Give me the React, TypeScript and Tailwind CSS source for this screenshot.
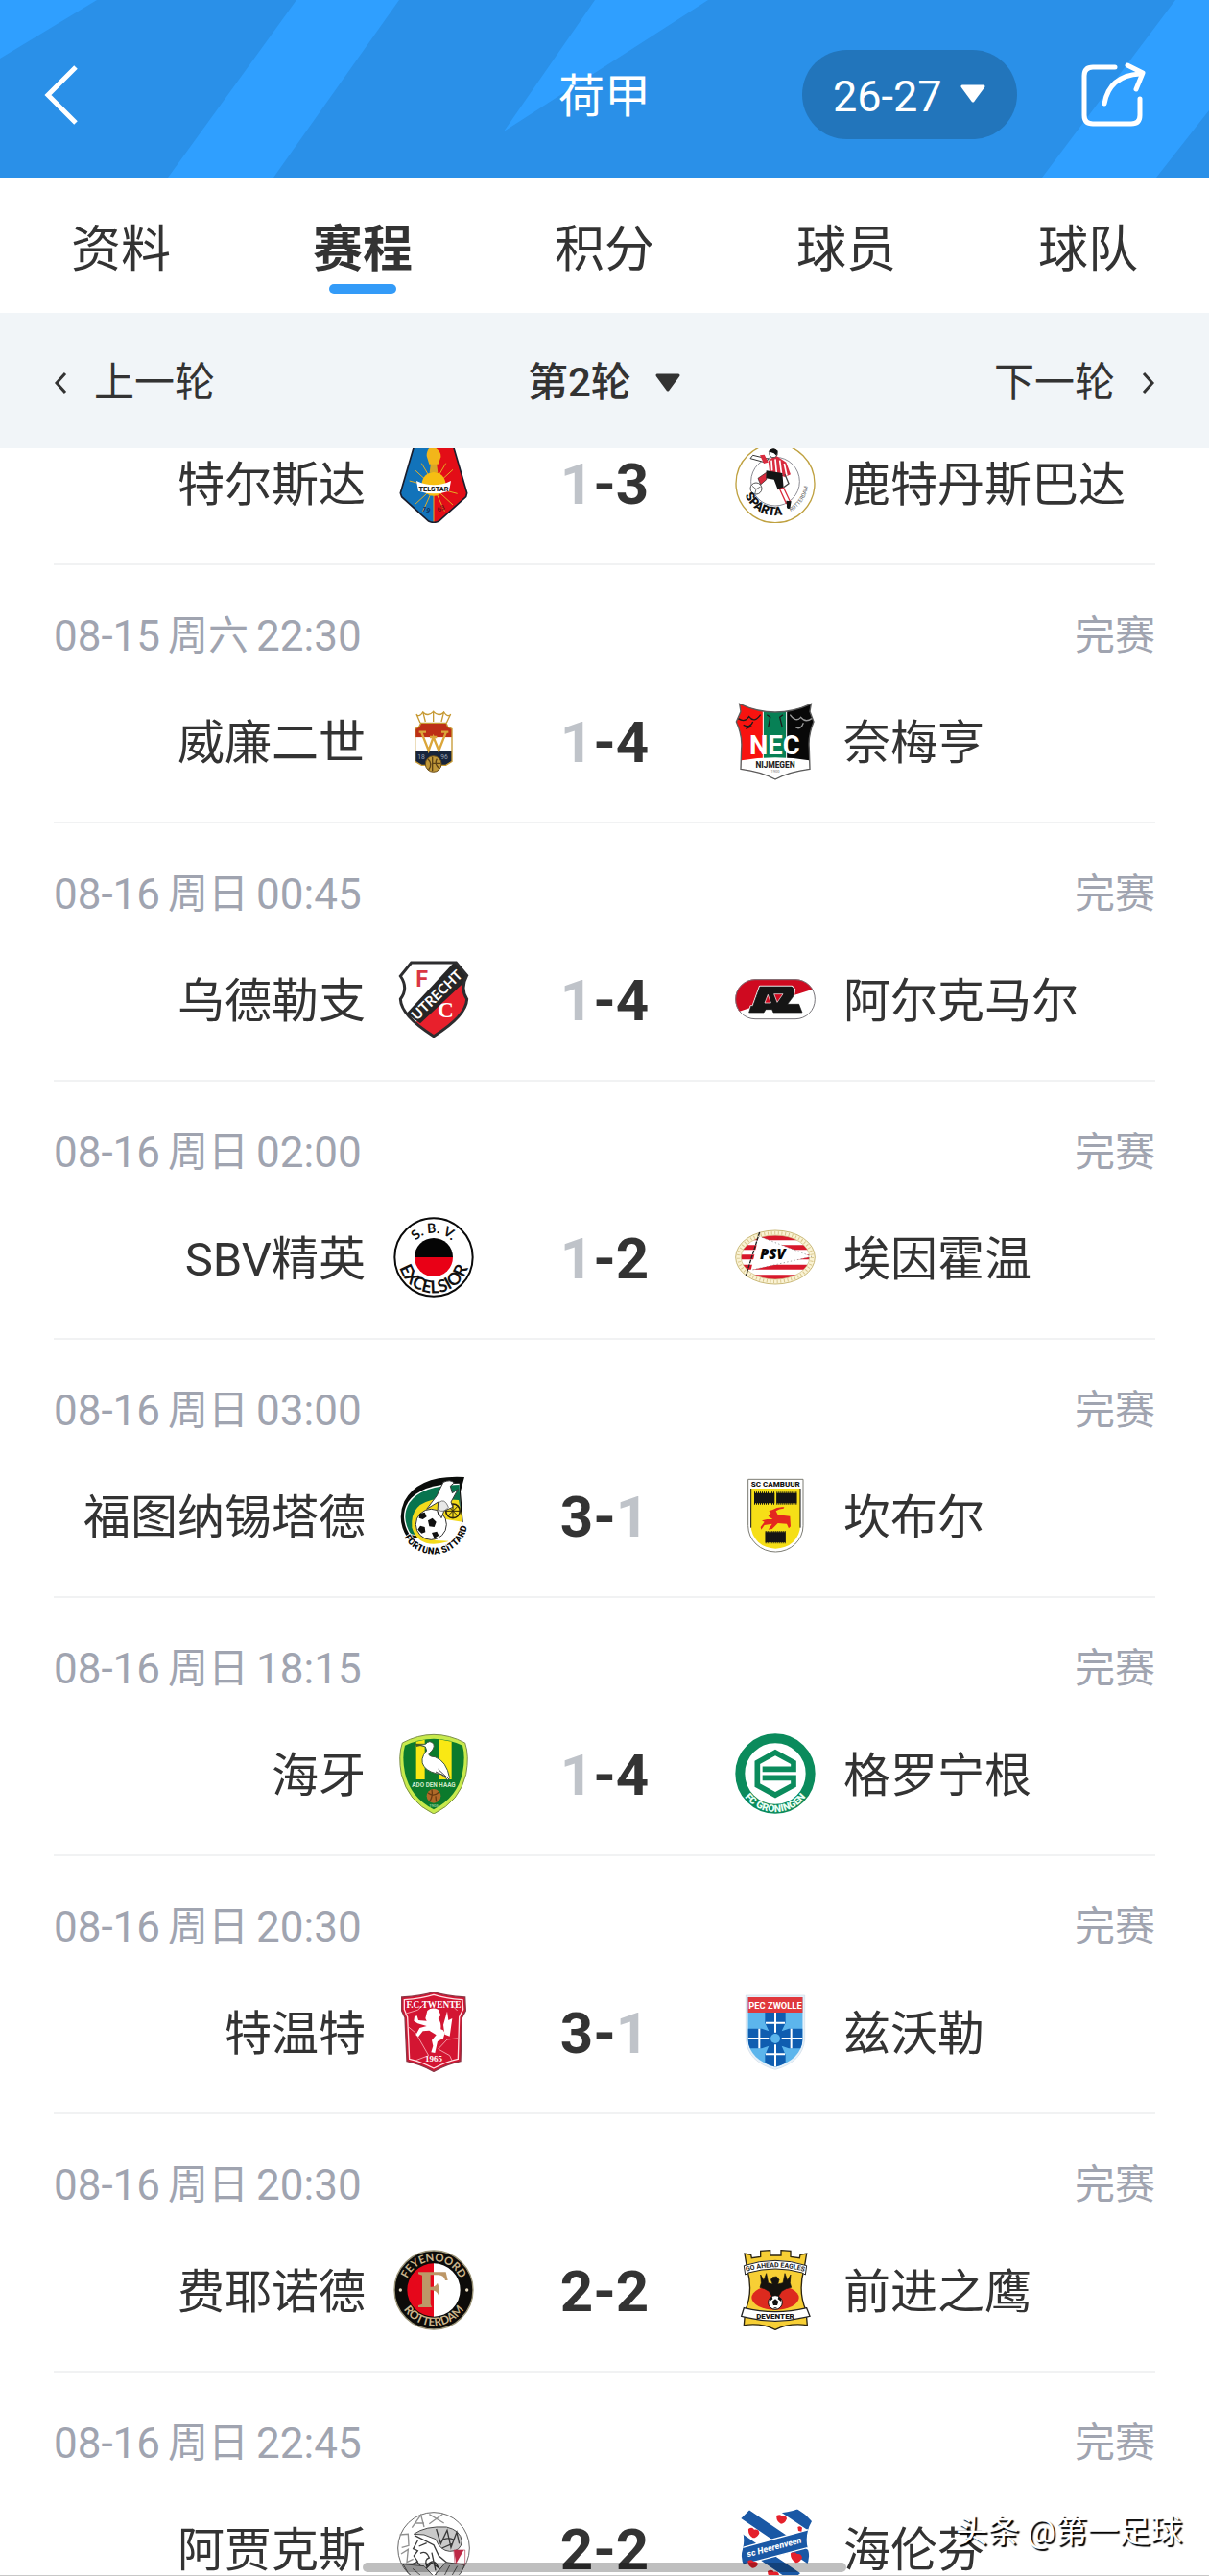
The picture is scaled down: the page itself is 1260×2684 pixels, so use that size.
import React from "react";

type TCrest = {
  children: React.ReactNode;
};

type TMatch = {
  date?: string;
  day?: string;
  time?: string;
  home: string;
  away: string;
  homeGoals: number;
  awayGoals: number;
  homeCrest: React.ReactNode;
  awayCrest: React.ReactNode;
};

const Crest = ({ children }: TCrest) => (
  <svg
    viewBox="0 0 252 252"
    className="size-[84px] shrink-0"
    aria-hidden="true"
  >
    {children}
  </svg>
);

const Telstar = () => (
  <Crest>
    <clipPath id="telstar">
      <path d="M80 2 H172 L188 14 L230 158 L227 170 L142 246 Q126 254 110 246 L26 170 L22 158 L64 14 Z" />
    </clipPath>
    <g clipPath="url(#telstar)">
      <rect width="126" height="252" fill="#1273ba" />
      <rect x="126" width="126" height="252" fill="#e30d17" />
      <path
        d="M126 60 V250 M66 85 L186 195 M186 85 L66 195 M88 65 L126 130 L164 65 M92 215 L126 140 L160 215 M50 120 L200 160"
        stroke="#e3ae25"
        strokeWidth="3"
        fill="none"
      />
      <path d="M113 95 L117 62 H135 L139 95 Z" fill="#d9a827" />
      <path d="M104 42 Q104 20 120 12 Q150 22 148 46 L140 68 H112 Z" fill="#f2b61a" />
      <circle cx="126" cy="130" r="37" fill="#f6bd12" />
      <path d="M72 120 Q126 146 180 120 L174 152 Q126 168 78 152 Z" fill="#fff" />
      <text x="126" y="154" textAnchor="middle" fontSize="22" fontWeight="800" fill="#222">
        TELSTAR
      </text>
      <text x="88" y="212" fontSize="22" fontWeight="700" fill="#12315e" transform="rotate(24 88 212)">
        19
      </text>
      <text x="140" y="218" fontSize="22" fontWeight="700" fill="#7a0d14" transform="rotate(-24 140 218)">
        63
      </text>
    </g>
    <path
      d="M80 2 H172 L188 14 L230 158 L227 170 L142 246 Q126 254 110 246 L26 170 L22 158 L64 14 Z"
      fill="none"
      stroke="#1a1d2c"
      strokeWidth="5"
    />
  </Crest>
);

const Sparta = () => (
  <Crest>
    <path id="sparta-arc" d="M24 126 A102 102 0 0 0 228 126" fill="none" />
    <circle cx="126" cy="128" r="123" fill="#fff" stroke="#bfa140" strokeWidth="4" />
    <circle cx="126" cy="122" r="76" fill="none" stroke="#8b8b93" strokeWidth="3" />
    <path d="M104 58 L126 40 L160 62 L174 100 L156 108 L108 90 Z" fill="#d92b3e" />
    <path d="M114 56 L116 88 M126 52 L130 96 M140 56 L146 102 M154 66 L162 104" stroke="#fff" strokeWidth="5" />
    <path d="M106 52 L56 40 L48 50 L92 62 Z" fill="#fff" stroke="#333" strokeWidth="3" />
    <path d="M78 40 L92 38 L104 62 L90 66 Z" fill="#d92b3e" />
    <circle cx="120" cy="34" r="13" fill="#fff" stroke="#111" strokeWidth="2" />
    <path d="M104 28 Q120 10 134 26 L130 42 L122 34 Z" fill="#111" />
    <path d="M98 88 L148 96 L152 142 L134 148 L122 116 L96 112 Z" fill="#141414" />
    <path d="M98 94 L72 112 L80 132 L98 116 Z" fill="#d92b3e" stroke="#222" strokeWidth="2" />
    <circle cx="66" cy="144" r="18" fill="#fff" stroke="#555" strokeWidth="3" />
    <path d="M54 136 L66 146 L80 138 M66 146 L62 162" stroke="#777" strokeWidth="3" fill="none" />
    <path d="M140 146 L152 142 L172 184 L160 190 Z" fill="#fff" stroke="#d92b3e" strokeWidth="4" />
    <path d="M160 182 L176 184 L172 206 Q160 210 162 196 Z" fill="#111" />
    <path d="M156 100 L168 128 L152 140" fill="none" stroke="#444" strokeWidth="4" />
    <text fontSize="38" fontWeight="900" fill="#111">
      <textPath href="#sparta-arc" startOffset="40">
        SPARTA
      </textPath>
    </text>
    <text fontSize="17" fill="#555">
      <textPath href="#sparta-arc" startOffset="210">
        ROTTERDAM
      </textPath>
    </text>
  </Crest>
);

const Willem = () => (
  <Crest>
    <path
      d="M84 70 L72 42 M100 66 L92 34 M125 66 V32 M150 66 L158 34 M166 70 L179 42 M72 44 Q82 52 92 36 Q108 52 125 34 Q142 52 158 36 Q168 52 179 44"
      fill="none"
      stroke="#c79a34"
      strokeWidth="4"
    />
    <clipPath id="willem">
      <path d="M86 70 H165 L170 82 L183 88 V190 L164 202 H88 L68 190 V88 L80 82 Z" />
    </clipPath>
    <g clipPath="url(#willem)">
      <rect width="252" height="115" fill="#bd2f16" />
      <rect y="115" width="252" height="42" fill="#fff" />
      <rect y="157" width="252" height="95" fill="#17243b" />
      <text x="76" y="184" fontSize="20" fill="#9aa3b5">18</text>
      <text x="148" y="184" fontSize="20" fill="#9aa3b5">96</text>
    </g>
    <path d="M86 70 H165 L170 82 L183 88 V190 L164 202 H88 L68 190 V88 L80 82 Z" fill="none" stroke="#c79a34" strokeWidth="4" />
    <path
      d="M88 100 L110 156 L125 114 L142 156 L164 100 M80 98 H102 M150 98 H172 M114 114 H136"
      fill="none"
      stroke="#dba63a"
      strokeWidth="7"
    />
    <circle cx="125" cy="198" r="25" fill="#c0983a" stroke="#6b4d18" strokeWidth="3" />
    <path d="M108 182 Q124 198 110 216 M122 176 V220 M136 182 Q126 198 144 212 M122 196 H148" fill="none" stroke="#5d4216" strokeWidth="4" />
  </Crest>
);

const Nec = () => (
  <Crest>
    <clipPath id="nec">
      <path d="M14 10 Q126 62 238 10 L234 34 L246 66 Q228 110 232 150 L234 214 Q170 222 126 246 Q82 222 18 214 L20 150 Q24 110 4 66 L18 34 Z" />
    </clipPath>
    <g clipPath="url(#nec)">
      <rect width="89" height="252" fill="#f8130f" />
      <rect x="89" width="71" height="252" fill="#078055" />
      <rect x="160" width="92" height="252" fill="#080808" />
      <path d="M88 0 V180 M161 0 V180" stroke="#fff" strokeWidth="3" />
      <path d="M0 190 Q126 166 252 190 V252 H0 Z" fill="#fff" />
      <path
        d="M10 56 Q30 70 44 50 Q60 72 80 44 M26 76 Q48 88 56 66 M34 88 L52 80 M100 44 L110 52 L104 84 M150 44 L140 52 L148 84"
        fill="none"
        stroke="#1b1b1b"
        strokeWidth="4"
      />
      <path d="M172 44 Q190 70 206 52 Q220 70 240 56 M190 84 Q206 92 214 70" fill="none" stroke="#9a9a9a" strokeWidth="4" />
    </g>
    <path
      d="M14 10 Q126 62 238 10 L234 34 L246 66 Q228 110 232 150 L234 214 Q170 222 126 246 Q82 222 18 214 L20 150 Q24 110 4 66 L18 34 Z"
      fill="none"
      stroke="#5b5b5b"
      strokeWidth="4"
    />
    <text x="124" y="168" textAnchor="middle" fontSize="82" fontWeight="700" fill="#fff">
      NEC
    </text>
    <text x="126" y="210" textAnchor="middle" fontSize="25" fontWeight="800" fill="#222">
      NIJMEGEN
    </text>
    <text x="126" y="225" textAnchor="middle" fontSize="12" fill="#777">
      1900
    </text>
  </Crest>
);

const Utrecht = () => (
  <Crest>
    <clipPath id="utrecht">
      <path d="M56 12 H196 L230 52 Q208 92 230 126 Q228 178 126 242 Q24 178 22 126 Q48 92 22 54 Z" />
    </clipPath>
    <g clipPath="url(#utrecht)">
      <rect width="252" height="252" fill="#fff" />
      <path d="M252 40 L70 198 L126 252 H252 Z" fill="#e8202c" />
      <path d="M196 4 L244 52 L84 202 L40 172 Z" fill="#262626" />
    </g>
    <path
      d="M56 12 H196 L230 52 Q208 92 230 126 Q228 178 126 242 Q24 178 22 126 Q48 92 22 54 Z"
      fill="none"
      stroke="#2d2d2f"
      strokeWidth="9"
    />
    <text x="70" y="88" fontSize="70" fontWeight="700" fill="#d93743">
      F
    </text>
    <text x="138" y="184" fontFamily="Liberation Serif" fontSize="70" fontWeight="700" fill="#fff">
      C
    </text>
    <text x="74" y="194" fontFamily="Lato" fontSize="44" fontWeight="700" fill="#fff" transform="rotate(-44 74 194)">
      UTRECHT
    </text>
  </Crest>
);

const Az = () => (
  <Crest>
    <clipPath id="az">
      <rect x="1" y="64" width="250" height="125" rx="62" />
    </clipPath>
    <g clipPath="url(#az)">
      <rect width="252" height="252" fill="#fff" />
      <path d="M0 60 H252 V92 L196 110 L50 152 L14 164 L0 166 Z" fill="#cf0a20" />
    </g>
    <rect x="2" y="65" width="248" height="123" rx="61" fill="none" stroke="#77757a" strokeWidth="3" />
    <path
      d="M78 87 H178 L186 96 L182 118 L164 142 H200 L210 168 H120 L116 158 H96 L90 168 H44 L50 148 H56 Z"
      fill="#151515"
      stroke="#fff"
      strokeWidth="7"
      strokeLinejoin="round"
    />
    <path
      d="M78 87 H178 L186 96 L182 118 L164 142 H200 L210 168 H120 L116 158 H96 L90 168 H44 L50 148 H56 Z"
      fill="#151515"
      stroke="#151515"
      strokeWidth="2"
    />
    <path d="M103 112 L93 138 H112 Z" fill="#cf0a20" stroke="#fff" strokeWidth="2" />
    <path d="M122 110 H150 L132 136 Z" fill="#cf0a20" stroke="#fff" strokeWidth="2" />
  </Crest>
);

const Excelsior = () => (
  <Crest>
    <path id="exc-top" d="M50 126 A76 76 0 0 1 202 126" fill="none" />
    <path id="exc-bottom" d="M14 126 A112 112 0 0 0 238 126" fill="none" />
    <circle cx="126" cy="126" r="122" fill="#fff" stroke="#0a0a0a" strokeWidth="6" />
    <path d="M66 126 A60 60 0 0 1 186 126 Z" fill="#050505" />
    <path d="M66 126 A60 60 0 0 0 186 126 Z" fill="#e90016" />
    <text fontFamily="Lato" fontSize="42" fontWeight="700" textAnchor="middle" fill="#111">
      <textPath href="#exc-top" startOffset="50%">
        S. B. V.
      </textPath>
    </text>
    <text fontFamily="Lato" fontSize="54" fontWeight="700" textAnchor="middle" fill="#111">
      <textPath href="#exc-bottom" startOffset="50%">
        EXCELSIOR
      </textPath>
    </text>
  </Crest>
);

const Psv = () => (
  <Crest>
    <clipPath id="psv">
      <ellipse cx="126" cy="126" rx="107" ry="69" />
    </clipPath>
    <ellipse cx="126" cy="126" rx="124" ry="84" fill="#faf3d4" stroke="#c9b878" strokeWidth="3" />
    <ellipse cx="126" cy="126" rx="115" ry="76" fill="none" stroke="#d9c68c" strokeWidth="10" strokeDasharray="3 8" />
    <g clipPath="url(#psv)">
      <rect width="252" height="252" fill="#fff" />
      <path d="M0 65 H252 M0 95 H252 M0 125 H252 M0 157 H252 M0 188 H252" stroke="#d8182b" strokeWidth="15" />
    </g>
    <ellipse cx="126" cy="126" rx="107" ry="69" fill="none" stroke="#c9b878" strokeWidth="2" />
    <path d="M74 60 L240 124 L50 166 Z" fill="#fff" />
    <path d="M74 60 L240 124 L50 166" fill="none" stroke="#777" strokeWidth="2" strokeDasharray="4 7" />
    <path d="M77 48 L34 184" stroke="#222" strokeWidth="4" strokeDasharray="12 3" />
    <text x="78" y="132" fontFamily="Open Sans" fontSize="45" fontWeight="800" fontStyle="italic" fill="#060606">
      PSV
    </text>
  </Crest>
);

const Fortuna = () => (
  <Crest>
    <path id="fortuna-arc" d="M22 160 A104 104 0 0 0 230 124" fill="none" />
    <path d="M222 6 L210 50 L218 146 L160 200 L44 196 Q8 140 34 82 Q78 -2 222 6 Z" fill="#0b0d0b" />
    <path d="M206 26 L210 146 L160 202 L50 186 Q18 130 46 84 Q86 26 206 26 Z" fill="#fff" />
    <path d="M206 30 L210 146 L160 202 L54 184 Q22 130 50 86 Q88 32 206 30 Z" fill="#08744e" />
    <path d="M204 78 L216 146 L170 208 Q80 234 58 164 Q50 84 140 74 Z" fill="#f4da1c" />
    <path d="M150 136 L216 146 L176 206 L130 204 Z" fill="#fff" />
    <circle cx="118" cy="154" r="48" fill="#fff" stroke="#333" strokeWidth="3" />
    <path
      d="M108 142 L122 134 L134 146 L128 162 L112 160 Z M82 120 L98 116 L104 130 L92 138 L80 134 Z M84 158 L98 162 L100 178 L88 182 L76 170 Z M120 180 L136 176 L142 188 L128 198 Z M136 112 L148 116 L154 128 L140 126 Z"
      fill="#111"
    />
    <circle cx="186" cy="112" r="22" fill="#f4da1c" stroke="#2b2410" strokeWidth="5" />
    <path d="M186 90 V134 M164 112 H208 M171 97 L201 127 M201 97 L171 127" stroke="#2b2410" strokeWidth="3" />
    <path
      d="M156 22 Q178 12 190 24 L178 34 L184 56 L202 44 L180 84 L186 100 L158 112 L150 134 L138 112 L140 84 L104 106 L136 64 L144 46 Z"
      fill="#fff"
      stroke="#3a3a3a"
      strokeWidth="3"
    />
    <path d="M142 86 Q160 70 172 100 Q156 120 140 108 Z" fill="#e8e8e8" stroke="#444" strokeWidth="2" />
    <text fontSize="29" fontWeight="900" textAnchor="middle" fill="#0a0a0a" stroke="#fff" strokeWidth="5" paintOrder="stroke">
      <textPath href="#fortuna-arc" startOffset="50%">
        FORTUNA SITTARD
      </textPath>
    </text>
  </Crest>
);

const Cambuur = () => (
  <Crest>
    <path d="M41 13 H213 V158 A86 82 0 0 1 41 158 Z" fill="#fff" stroke="#7c7c74" strokeWidth="3" />
    <path d="M50 42 H204 V158 A77 72 0 0 1 50 158 Z" fill="#f6df17" />
    <path d="M50 42 V164 M204 42 V164" stroke="#111" strokeWidth="3" />
    <text x="127" y="36" textAnchor="middle" fontSize="24" fontWeight="900" fill="#151515">
      SC CAMBUUR
    </text>
    <path
      d="M60 72 H124 M130 72 H193 M95 194 H158"
      stroke="#151515"
      strokeWidth="32"
    />
    <path d="M60 72 H124 M130 72 H193 M95 194 H158" stroke="#151515" strokeWidth="40" strokeDasharray="3 3" />
    <path
      d="M104 128 L112 118 L106 112 L118 108 Q132 98 154 100 L152 104 Q138 104 128 112 L134 124 L172 128 L174 160 L168 166 L162 152 L134 150 L116 168 L104 170 L116 152 L92 156 L82 170 L80 162 L92 146 L84 142 L100 138 L118 138 Z"
      fill="#e4281f"
    />
  </Crest>
);

const DenHaag = () => (
  <Crest>
    <path
      d="M28 30 Q126 -22 224 30 Q238 70 227 128 Q208 212 126 252 Q44 212 25 128 Q14 70 28 30 Z"
      fill="#c8ea4c"
      stroke="#7d8f4c"
      strokeWidth="3"
    />
    <path d="M36 38 Q126 -4 216 38 Q226 72 216 124 Q200 200 126 238 Q52 200 36 124 Q26 72 36 38 Z" fill="#0b7a2c" />
    <path d="M71 26 V144 H98 V20 Z M142 19 V144 H182 V26 Z" fill="#f9e814" />
    <path
      d="M70 34 L100 34 Q114 18 126 34 Q130 48 112 62 Q106 72 130 74 Q166 86 176 140 L170 146 L150 128 Q112 124 96 104 Q80 82 104 54 L100 42 Z"
      fill="#fff"
      stroke="#3f5940"
      strokeWidth="3"
    />
    <path d="M140 112 L174 144 M132 120 L166 136" stroke="#444" strokeWidth="3" />
    <path d="M68 32 L98 36 L72 42 Z" fill="#4a5a23" />
    <text x="126" y="168" textAnchor="middle" fontSize="19" fontWeight="700" fill="#cfe8c8">
      ADO DEN HAAG
    </text>
    <circle cx="126" cy="196" r="22" fill="#b16a28" />
    <path d="M108 186 Q126 200 142 184 M114 212 Q124 196 120 176 M134 214 L132 196" fill="none" stroke="#6b3c12" strokeWidth="4" />
    <text x="126" y="230" textAnchor="middle" fontSize="13" fill="#cfe8c8">
      1905
    </text>
  </Crest>
);

const Groningen = () => (
  <Crest>
    <path id="gro-arc" d="M6 126 A120 120 0 0 0 246 126" fill="none" />
    <circle cx="126" cy="126" r="110" fill="#fff" stroke="#0b8b5c" strokeWidth="30" />
    <path
      d="M86 112 H183 V91 L126 60 L70 91 V162 L126 193 L183 162 V139 H86"
      fill="none"
      stroke="#0b8b5c"
      strokeWidth="17"
    />
    <text fontSize="31" fontWeight="900" textAnchor="middle" fill="#eafff5">
      <textPath href="#gro-arc" startOffset="50%">
        FC GRONINGEN
      </textPath>
    </text>
  </Crest>
);

const Twente = () => (
  <Crest>
    <path
      d="M26 18 Q90 14 126 2 Q162 14 224 18 L226 60 L214 82 L210 218 Q170 226 126 250 Q82 226 42 218 L36 82 L26 60 Z"
      fill="#d31532"
      stroke="#8d3545"
      strokeWidth="4"
    />
    <path
      d="M34 26 Q90 22 126 10 Q162 22 216 26 L218 56 L206 80 L202 211 Q168 218 126 240 Q84 218 50 211 L44 80 L34 56 Z"
      fill="none"
      stroke="#ffdfe3"
      strokeWidth="4"
    />
    <path
      d="M36 70 L76 58 L102 34 M46 110 L70 130 L110 200 L68 216 M206 146 L168 150 L140 180 L176 200 L184 218 M200 60 L180 40"
      fill="none"
      stroke="#f59aa6"
      strokeWidth="3"
    />
    <path
      d="M106 60 Q120 48 140 56 L148 74 L140 84 Q150 96 148 118 Q166 122 156 146 L138 156 L130 192 L118 190 L124 170 L120 152 L134 136 L112 122 L92 124 L78 142 L70 136 L82 114 L104 108 L76 100 L64 92 L66 78 L74 76 L78 90 L104 92 L100 84 Z"
      fill="#fff"
    />
    <path d="M160 134 L156 104 L168 62 L172 90 L184 84 L176 140 Z" fill="#fff" />
    <text x="126" y="50" textAnchor="middle" fontFamily="Liberation Serif" fontSize="28" fontWeight="700" fill="#fff">
      F.C.TWENTE
    </text>
    <text x="126" y="218" textAnchor="middle" fontFamily="Liberation Serif" fontSize="27" fontWeight="700" fill="#fff">
      1965
    </text>
  </Crest>
);

const Zwolle = () => (
  <Crest>
    <path d="M34 12 H218 V150 Q212 220 126 244 Q40 220 34 150 Z" fill="#e6f1fa" stroke="#cfdbe6" strokeWidth="2" />
    <clipPath id="zwolle">
      <path d="M40 18 H212 V150 Q206 214 126 236 Q46 214 40 150 Z" />
    </clipPath>
    <g clipPath="url(#zwolle)">
      <rect width="252" height="252" fill="#5cb5ec" />
      <path d="M94 60 H158 V98 L146 124 L168 116 H212 V178 H168 L146 170 L158 198 V240 H94 V198 L106 170 L84 178 H40 V116 H84 L106 124 L94 98 Z" fill="#0f5db0" />
      <circle cx="126" cy="147" r="15" fill="#5cb5ec" />
      <path d="M126 66 V128 M126 166 V240 M40 147 H106 M146 147 H212 M96 98 H156 M96 196 H156 M76 116 V178 M176 116 V178" stroke="#fff" strokeWidth="6" />
      <rect width="252" height="66" fill="#e0383d" />
    </g>
    <text x="126" y="53" textAnchor="middle" fontSize="28" fontWeight="700" fill="#fff">
      PEC ZWOLLE
    </text>
  </Crest>
);

const Feyenoord = () => (
  <Crest>
    <path id="fey-top" d="M36 126 A90 90 0 0 1 216 126" fill="none" />
    <path id="fey-bottom" d="M14 126 A112 112 0 0 0 238 126" fill="none" />
    <circle cx="126" cy="126" r="123" fill="#0c0b09" stroke="#9b9477" strokeWidth="4" />
    <path d="M126 43 A83 83 0 0 0 126 209 Z" fill="#e6071b" />
    <path d="M126 43 A83 83 0 0 1 126 209 Z" fill="#fff" />
    <path
      d="M78 70 H164 L170 96 L162 96 Q158 80 140 79 H116 V116 Q130 118 138 104 L142 116 V144 Q136 126 116 126 V170 L120 180 H78 V174 L90 170 V80 L78 76 Z"
      fill="#bd9767"
    />
    <text fontFamily="Lato" fontSize="34" fontWeight="700" textAnchor="middle" fill="#cbb58c">
      <textPath href="#fey-top" startOffset="50%">
        FEYENOORD
      </textPath>
    </text>
    <text fontFamily="Lato" fontSize="36" fontWeight="700" textAnchor="middle" fill="#cbb58c">
      <textPath href="#fey-bottom" startOffset="50%">
        ROTTERDAM
      </textPath>
    </text>
    <circle cx="22" cy="126" r="5" fill="#e4d8bd" />
    <circle cx="230" cy="126" r="5" fill="#e4d8bd" />
  </Crest>
);

const GoAhead = () => (
  <Crest>
    <path id="gae-arc" d="M30 70 Q126 40 222 70" fill="none" />
    <path
      d="M38 60 L30 12 L50 16 L52 26 L80 22 V4 L110 2 V18 H144 V2 L174 4 V22 L202 26 L204 16 L224 12 L216 60 Q196 130 222 190 L226 236 Q170 228 126 250 Q82 228 28 236 L32 190 Q58 130 38 60 Z"
      fill="#f7cf35"
      stroke="#2c2512"
      strokeWidth="4"
    />
    <ellipse cx="126" cy="150" rx="74" ry="38" fill="#dd2a1e" />
    <path
      d="M118 86 L130 84 L138 94 L134 108 L150 104 L156 74 L164 96 L174 78 L172 104 L176 118 L160 122 L146 130 L136 146 L126 154 L116 146 L106 130 L92 122 L78 118 L82 104 L80 78 L90 96 L98 74 L104 104 L118 108 L112 94 Z"
      fill="#15120e"
      stroke="#15120e"
      strokeWidth="2"
    />
    <circle cx="126" cy="165" r="22" fill="#fff" stroke="#111" strokeWidth="3" />
    <path d="M126 154 L136 162 L132 174 H120 L116 162 Z M108 152 L116 146 L118 154 L108 162 Z M144 152 L136 146 L134 154 L144 162 Z M118 184 L126 180 L134 184 Z" fill="#111" />
    <path d="M28 50 Q126 18 224 50 L220 78 L210 72 Q126 48 42 72 L32 78 Z" fill="#fff" stroke="#222" strokeWidth="3" />
    <text fontSize="21" fontWeight="700" textAnchor="middle" fill="#222">
      <textPath href="#gae-arc" startOffset="50%">
        GO AHEAD EAGLES
      </textPath>
    </text>
    <path d="M28 182 Q126 206 224 182 L234 208 L216 212 Q126 234 36 212 L20 208 Z" fill="#fff" stroke="#222" strokeWidth="4" />
    <text x="126" y="217" textAnchor="middle" fontSize="24" fontWeight="900" fill="#161616">
      DEVENTER
    </text>
  </Crest>
);

const Ajax = () => (
  <Crest>
    <circle cx="126" cy="126" r="112" fill="#fff" stroke="#6a6a6a" strokeWidth="3" />
    <path
      d="M58 62 L86 22 L96 60 M68 48 H96 M112 20 L158 48 M156 18 L112 50 M20 84 L46 82 L48 118 L26 124 M24 144 L46 130 L42 170 L62 160"
      fill="none"
      stroke="#909090"
      strokeWidth="4"
    />
    <path
      d="M64 82 Q100 56 166 60 Q210 70 214 104 Q212 136 176 136 Q146 134 132 98 L96 84 Z"
      fill="#c9c9c9"
      stroke="#4b4b4b"
      strokeWidth="3"
    />
    <path
      d="M66 86 L126 116 L142 150 L196 196 M134 66 L148 112 L168 70 L180 124 L198 76 L206 112 M76 102 L62 128 L76 134 L64 150 L76 168 L60 176 M80 120 L104 110 M84 142 Q104 132 112 156 Q96 160 104 182 Q126 152 140 186 M120 140 L132 196 M150 104 Q168 88 190 100 M152 126 L184 112 M72 166 L96 196 L120 172 L158 200"
      fill="none"
      stroke="#3a3a3a"
      strokeWidth="4"
    />
    <path d="M30 176 L96 182 L126 214 L164 170 L222 178 Q206 238 126 238 Q54 236 30 176 Z" fill="#c4c4c4" stroke="#4f4f4f" strokeWidth="3" />
    <path d="M60 190 L110 232 M136 200 L122 236 M176 180 L150 230 M200 182 L176 224" stroke="#505050" strokeWidth="3" />
    <path d="M189 132 H224 V178 L192 172 Z" fill="#fff" stroke="#b03a52" strokeWidth="2" />
    <path d="M189 132 H220 L196 174 Z" fill="#bd2946" />
  </Crest>
);

const Heerenveen = () => (
  <Crest>
    <clipPath id="heerenveen">
      <path d="M50 2 Q126 30 202 2 L240 42 Q216 84 228 130 Q250 200 126 250 Q2 200 24 130 Q36 84 10 42 Z" />
    </clipPath>
    <g clipPath="url(#heerenveen)">
      <rect width="252" height="252" fill="#fff" />
      <path d="M8 4 L250 168 M120 -24 L270 76 M0 88 L210 230" stroke="#1a58a5" strokeWidth="36" />
      <path d="M10 128 L252 62 V118 L10 182 Z" fill="#1a58a5" />
      <path d="M10 128 L252 62 M10 182 L252 118" stroke="#fff" strokeWidth="4" />
      <path
        d="M130 24 Q142 18 148 26 Q160 22 162 34 Q156 50 144 50 Q128 42 130 24 Z M42 66 Q54 58 60 68 Q76 66 76 80 Q68 94 56 94 Q40 84 42 66 Z M174 142 Q188 134 194 144 Q208 142 210 156 Q202 172 190 172 Q172 160 174 142 Z M40 166 Q52 158 58 168 Q70 166 72 176 Q66 188 54 188 Q40 182 40 166 Z M102 198 Q116 190 122 200 Q136 198 138 210 Q130 224 120 224 Q102 216 102 198 Z M196 60 Q204 54 210 62 L208 74 L198 72 Z"
        fill="#e5202b"
      />
    </g>
    <text x="40" y="154" fontSize="27" fontWeight="800" fontStyle="italic" fill="#fff" transform="rotate(-15 40 154)">
      sc Heerenveen
    </text>
  </Crest>
);

const matches: TMatch[] = [
  { home: "特尔斯达", away: "鹿特丹斯巴达", homeGoals: 1, awayGoals: 3, homeCrest: <Telstar />, awayCrest: <Sparta /> },
  { date: "08-15", day: "周六", time: "22:30", home: "威廉二世", away: "奈梅亨", homeGoals: 1, awayGoals: 4, homeCrest: <Willem />, awayCrest: <Nec /> },
  { date: "08-16", day: "周日", time: "00:45", home: "乌德勒支", away: "阿尔克马尔", homeGoals: 1, awayGoals: 4, homeCrest: <Utrecht />, awayCrest: <Az /> },
  { date: "08-16", day: "周日", time: "02:00", home: "SBV精英", away: "埃因霍温", homeGoals: 1, awayGoals: 2, homeCrest: <Excelsior />, awayCrest: <Psv /> },
  { date: "08-16", day: "周日", time: "03:00", home: "福图纳锡塔德", away: "坎布尔", homeGoals: 3, awayGoals: 1, homeCrest: <Fortuna />, awayCrest: <Cambuur /> },
  { date: "08-16", day: "周日", time: "18:15", home: "海牙", away: "格罗宁根", homeGoals: 1, awayGoals: 4, homeCrest: <DenHaag />, awayCrest: <Groningen /> },
  { date: "08-16", day: "周日", time: "20:30", home: "特温特", away: "兹沃勒", homeGoals: 3, awayGoals: 1, homeCrest: <Twente />, awayCrest: <Zwolle /> },
  { date: "08-16", day: "周日", time: "20:30", home: "费耶诺德", away: "前进之鹰", homeGoals: 2, awayGoals: 2, homeCrest: <Feyenoord />, awayCrest: <GoAhead /> },
  { date: "08-16", day: "周日", time: "22:45", home: "阿贾克斯", away: "海伦芬", homeGoals: 2, awayGoals: 2, homeCrest: <Ajax />, awayCrest: <Heerenveen /> },
];

const tabs = ["资料", "赛程", "积分", "球员", "球队"];

const Caret = ({ className }: { className: string }) => (
  <svg viewBox="0 0 28 20" className={className} aria-hidden="true">
    <path
      d="M3 2 H25 L14 17 Z"
      fill="currentColor"
      stroke="currentColor"
      strokeWidth="3"
      strokeLinejoin="round"
    />
  </svg>
);

const Header = () => (
  <header className="relative shrink-0 bg-[#2a90e8] text-white">
    <svg
      viewBox="0 0 1260 185"
      preserveAspectRatio="none"
      className="absolute inset-0 size-full"
      aria-hidden="true"
    >
      <path
        d="M0 0 H101 L0 61 Z M309 0 H416 L285 185 H175 Z M620 0 H738 L525 137 Z M1225 0 H1260 V115 L1205 185 H1086 Z"
        fill="#2f9fff"
      />
    </svg>
    <div className="relative grid grid-cols-[1fr_auto_1fr] items-center pt-[52px] pb-10 pl-11 pr-[66px]">
      <button type="button" aria-label="返回" className="justify-self-start">
        <svg viewBox="0 0 40 68" className="h-[68px] w-10" fill="none" aria-hidden="true">
          <path d="M35 5 L6 34 L35 63" stroke="currentColor" strokeWidth="5" />
        </svg>
      </button>
      <h1 className="pt-1 pl-[22px] text-[48px] leading-[64px]">荷甲</h1>
      <div className="flex items-center justify-end gap-[66px]">
        <div className="relative">
          <select
            aria-label="赛季"
            className="h-[93px] w-56 appearance-none rounded-full bg-[#2275bb] pt-1 pl-8 text-[45px]"
          >
            <option>26-27</option>
          </select>
          <Caret className="pointer-events-none absolute right-8 top-9 h-5 w-7" />
        </div>
        <button type="button" aria-label="分享">
          <svg
            viewBox="0 0 68 68"
            className="size-[68px]"
            fill="none"
            stroke="currentColor"
            strokeWidth="5"
            strokeLinecap="round"
            strokeLinejoin="round"
            aria-hidden="true"
          >
            <path d="M36 5 H13 Q4 5 4 14 V55 Q4 64 13 64 H53 Q62 64 62 55 V38" />
            <path d="M25 43 Q30 14 62 12" />
            <path d="M49 3 L65 11 L58 28" />
          </svg>
        </button>
      </div>
    </div>
  </header>
);

const Tabs = () => (
  <nav className="grid shrink-0 grid-cols-5 bg-white pt-[42px] pb-5">
    {tabs.map((tab, index) => (
      <a key={tab} href="#" className="flex flex-col items-center">
        <span
          className={`text-[52px] leading-[68px] ${
            index === 1 ? "font-bold" : "font-normal"
          }`}
        >
          {tab}
        </span>
        <span
          className={`mt-px h-2.5 w-[70px] rounded-full ${
            index === 1 ? "bg-[#339bf8]" : "bg-transparent"
          }`}
        />
      </a>
    ))}
  </nav>
);

const RoundBar = () => (
  <div className="grid h-[141px] shrink-0 grid-cols-3 items-center bg-[#f1f5f8] px-14 pt-1 text-[42px]">
    <button type="button" className="flex items-center gap-7 justify-self-start">
      <svg viewBox="0 0 14 22" className="h-[22px] w-3.5" fill="none" aria-hidden="true">
        <path d="M12 1 L3 11 L12 21" stroke="currentColor" strokeWidth="3" />
      </svg>
      上一轮
    </button>
    <div className="relative justify-self-center">
      <select
        aria-label="轮次"
        className="h-16 w-[160px] appearance-none font-medium"
      >
        <option>第2轮</option>
      </select>
      <Caret className="pointer-events-none absolute right-0 top-[22px] h-5 w-7" />
    </div>
    <button type="button" className="flex items-center gap-7 justify-self-end">
      下一轮
      <svg viewBox="0 0 14 22" className="h-[22px] w-3.5" fill="none" aria-hidden="true">
        <path d="M2 1 L11 11 L2 21" stroke="currentColor" strokeWidth="3" />
      </svg>
    </button>
  </div>
);

const MatchRow = ({ match }: { match: TMatch }) => {
  const { homeGoals, awayGoals } = match;

  return (
    <li
      className={`flex shrink-0 flex-col border-b-2 border-[#f1f2f3] pb-[42px] ${
        match.date ? "" : "h-[122px] justify-end"
      }`}
    >
      {match.date && (
        <div className="flex items-center justify-between pt-[46px] pb-[39px] text-[42px] leading-[56px] text-[#a0a4b0]">
          <p className="flex gap-2">
            <span className="text-[44px]">{match.date}</span>
            <span>{match.day}</span>
            <span className="text-[44px]">{match.time}</span>
          </p>
          <span>完赛</span>
        </div>
      )}
      <div className="grid grid-cols-[1fr_272px_1fr] items-center text-[49px] leading-[64px]">
        <div className="flex items-center justify-end gap-[29px]">
          <span className="pt-1.5 whitespace-nowrap">{match.home}</span>
          {match.homeCrest}
        </div>
        <div className="flex items-center justify-center pt-1 text-[60px] leading-[60px] font-bold">
          <span className={homeGoals < awayGoals ? "text-[#bfc3c9]" : ""}>
            {homeGoals}
          </span>
          <span>-</span>
          <span className={awayGoals < homeGoals ? "text-[#bfc3c9]" : ""}>
            {awayGoals}
          </span>
        </div>
        <div className="flex items-center gap-[29px]">
          {match.awayCrest}
          <span className="pt-1.5 whitespace-nowrap">{match.away}</span>
        </div>
      </div>
    </li>
  );
};

const SchedulePage = () => {
  return (
    <div className="relative flex h-screen flex-col overflow-hidden bg-white font-['Roboto','Noto_Sans_CJK_SC',sans-serif] text-[#333]">
      <Header />
      <Tabs />
      <RoundBar />
      <ul className="flex min-h-0 flex-1 flex-col overflow-hidden px-14">
        {matches.map((match) => (
          <MatchRow key={match.home} match={match} />
        ))}
      </ul>
      <div className="absolute bottom-1 left-1/2 h-2.5 w-[504px] -translate-x-1/2 rounded-full bg-black/25" />
      <div className="absolute inset-x-0 bottom-0 h-px bg-[#c8c8c8]" />
      <p className="absolute right-7 bottom-[26px] text-[33px] leading-10 text-white [text-shadow:2px_2px_1px_#000]">
        头条 @第一足球
      </p>
    </div>
  );
};

export default SchedulePage;
